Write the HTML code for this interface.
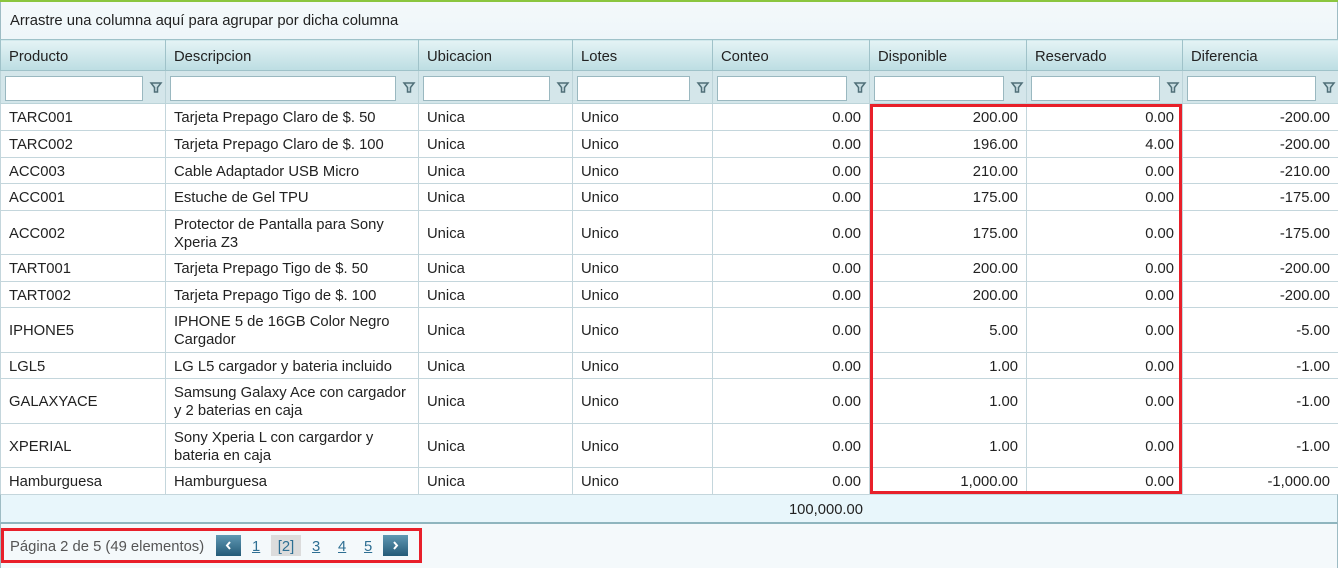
<!DOCTYPE html>
<html><head><meta charset="utf-8"><style>
*{margin:0;padding:0;box-sizing:border-box}
body{width:1338px;height:568px;background:#fff;font-family:"Liberation Sans",sans-serif;font-size:14.8px;color:#222;position:relative;overflow:hidden}
.top{position:absolute;left:0;top:0;width:1338px;height:2px;background:#8cc63f}
.grp{position:absolute;left:0;top:2px;width:1338px;height:37px;background:linear-gradient(#f4f9fb,#eef6f9);border-left:1px solid #9ebcc4;border-right:1px solid #9ebcc4;padding:11px 9px 0;color:#222}
table{position:absolute;left:0;top:39px;border-collapse:collapse;table-layout:fixed;width:1338px}
td,th{border:1px solid #c4d6dc;padding:2px 8px 0;white-space:nowrap;overflow:hidden}
th{height:31px;font-weight:normal;text-align:left;background:linear-gradient(#e4f3f5,#bcdde2);border-color:#9fc2c9;padding-top:3px}
tr.f td{height:33px;background:#d4e6ea;padding:0 4px;border-color:#bcd4d9}
tr.f td div{position:relative;height:25px}
tr.f input{position:absolute;left:0;top:1px;height:25px;width:calc(100% - 18px);border:1px solid #9ab8c0;background:#fff}
tr.f svg{position:absolute;right:-2px;top:6px}
td{line-height:18px;vertical-align:middle}
td.r{text-align:right}
.foot{position:absolute;left:0;top:494px;width:1338px;height:30px;background:#e8f6fb;border:1px solid #9ebcc4;border-top:1px solid #c4d6dc;border-bottom:2px solid #8fb5be}
.foot span{position:absolute;right:474px;top:7px}
.pager{position:absolute;left:0;top:524px;width:1338px;height:44px;background:#f4f9fb;border-left:1px solid #9ebcc4;border-right:1px solid #9ebcc4}
.red1{position:absolute;left:870px;top:104px;width:312px;height:390px;border:3px solid #e8202a}
.red2{position:absolute;left:1px;top:528px;width:421px;height:35px;border:3px solid #e8202a}
.pt{position:absolute;top:15px;color:#555}
.btn{position:absolute;top:11px;width:25px;height:21px;background:linear-gradient(#5f98b3,#255b78)}
.btn svg{position:absolute;left:8px;top:5px}
.pn{position:absolute;top:15px;color:#2e6f93;text-decoration:underline}
.cur{position:absolute;left:270px;top:11px;width:30px;height:21px;background:#dcdcdc;color:#2e6f93;text-align:center;line-height:24px}
</style></head><body>
<div class="top"></div>
<div class="grp">Arrastre una columna aquí para agrupar por dicha columna</div>
<table>
<colgroup><col style="width:165px"><col style="width:253px"><col style="width:154px"><col style="width:140px"><col style="width:157px"><col style="width:157px"><col style="width:156px"><col style="width:156px"></colgroup>
<tr><th>Producto</th><th>Descripcion</th><th>Ubicacion</th><th>Lotes</th><th>Conteo</th><th>Disponible</th><th>Reservado</th><th>Diferencia</th></tr>
<tr class="f">
<td><div><input><svg width="14" height="14" viewBox="0 0 14 14"><path d="M2 2h10l-3.5 4.5v4.5h-3v-4.5z" fill="#c8dde2" stroke="#4f6f78" stroke-width="1.5"/></svg></div></td>
<td><div><input><svg width="14" height="14" viewBox="0 0 14 14"><path d="M2 2h10l-3.5 4.5v4.5h-3v-4.5z" fill="#c8dde2" stroke="#4f6f78" stroke-width="1.5"/></svg></div></td>
<td><div><input><svg width="14" height="14" viewBox="0 0 14 14"><path d="M2 2h10l-3.5 4.5v4.5h-3v-4.5z" fill="#c8dde2" stroke="#4f6f78" stroke-width="1.5"/></svg></div></td>
<td><div><input><svg width="14" height="14" viewBox="0 0 14 14"><path d="M2 2h10l-3.5 4.5v4.5h-3v-4.5z" fill="#c8dde2" stroke="#4f6f78" stroke-width="1.5"/></svg></div></td>
<td><div><input><svg width="14" height="14" viewBox="0 0 14 14"><path d="M2 2h10l-3.5 4.5v4.5h-3v-4.5z" fill="#c8dde2" stroke="#4f6f78" stroke-width="1.5"/></svg></div></td>
<td><div><input><svg width="14" height="14" viewBox="0 0 14 14"><path d="M2 2h10l-3.5 4.5v4.5h-3v-4.5z" fill="#c8dde2" stroke="#4f6f78" stroke-width="1.5"/></svg></div></td>
<td><div><input><svg width="14" height="14" viewBox="0 0 14 14"><path d="M2 2h10l-3.5 4.5v4.5h-3v-4.5z" fill="#c8dde2" stroke="#4f6f78" stroke-width="1.5"/></svg></div></td>
<td><div><input><svg width="14" height="14" viewBox="0 0 14 14"><path d="M2 2h10l-3.5 4.5v4.5h-3v-4.5z" fill="#c8dde2" stroke="#4f6f78" stroke-width="1.5"/></svg></div></td>
</tr>
<tr style="height:27px"><td>TARC001</td><td>Tarjeta Prepago Claro de $. 50</td><td>Unica</td><td>Unico</td><td class="r">0.00</td><td class="r">200.00</td><td class="r">0.00</td><td class="r">-200.00</td></tr>
<tr style="height:27px"><td>TARC002</td><td>Tarjeta Prepago Claro de $. 100</td><td>Unica</td><td>Unico</td><td class="r">0.00</td><td class="r">196.00</td><td class="r">4.00</td><td class="r">-200.00</td></tr>
<tr style="height:26px"><td>ACC003</td><td>Cable Adaptador USB Micro</td><td>Unica</td><td>Unico</td><td class="r">0.00</td><td class="r">210.00</td><td class="r">0.00</td><td class="r">-210.00</td></tr>
<tr style="height:27px"><td>ACC001</td><td>Estuche de Gel TPU</td><td>Unica</td><td>Unico</td><td class="r">0.00</td><td class="r">175.00</td><td class="r">0.00</td><td class="r">-175.00</td></tr>
<tr style="height:44px"><td>ACC002</td><td>Protector de Pantalla para Sony<br>Xperia Z3</td><td>Unica</td><td>Unico</td><td class="r">0.00</td><td class="r">175.00</td><td class="r">0.00</td><td class="r">-175.00</td></tr>
<tr style="height:27px"><td>TART001</td><td>Tarjeta Prepago Tigo de $. 50</td><td>Unica</td><td>Unico</td><td class="r">0.00</td><td class="r">200.00</td><td class="r">0.00</td><td class="r">-200.00</td></tr>
<tr style="height:26px"><td>TART002</td><td>Tarjeta Prepago Tigo de $. 100</td><td>Unica</td><td>Unico</td><td class="r">0.00</td><td class="r">200.00</td><td class="r">0.00</td><td class="r">-200.00</td></tr>
<tr style="height:45px"><td>IPHONE5</td><td>IPHONE 5 de 16GB Color Negro<br>Cargador</td><td>Unica</td><td>Unico</td><td class="r">0.00</td><td class="r">5.00</td><td class="r">0.00</td><td class="r">-5.00</td></tr>
<tr style="height:26px"><td>LGL5</td><td>LG L5 cargador y bateria incluido</td><td>Unica</td><td>Unico</td><td class="r">0.00</td><td class="r">1.00</td><td class="r">0.00</td><td class="r">-1.00</td></tr>
<tr style="height:45px"><td>GALAXYACE</td><td>Samsung Galaxy Ace con cargador<br>y 2 baterias en caja</td><td>Unica</td><td>Unico</td><td class="r">0.00</td><td class="r">1.00</td><td class="r">0.00</td><td class="r">-1.00</td></tr>
<tr style="height:44px"><td>XPERIAL</td><td>Sony Xperia L con cargardor y<br>bateria en caja</td><td>Unica</td><td>Unico</td><td class="r">0.00</td><td class="r">1.00</td><td class="r">0.00</td><td class="r">-1.00</td></tr>
<tr style="height:27px"><td>Hamburguesa</td><td>Hamburguesa</td><td>Unica</td><td>Unico</td><td class="r">0.00</td><td class="r">1,000.00</td><td class="r">0.00</td><td class="r">-1,000.00</td></tr>
</table>
<div class="foot"><span>100,000.00</span></div>
<div class="pager">
<span class="pt" style="left:9px">Página 2 de 5 (49 elementos)</span>
<div class="btn" style="left:215px"><svg width="9" height="11" viewBox="0 0 9 11"><path d="M6 2L3 5.5L6 9" stroke="#fff" stroke-width="2" fill="none"/></svg></div>
<span class="pn" style="left:251px">1</span>
<div class="cur">[2]</div>
<span class="pn" style="left:311px">3</span>
<span class="pn" style="left:337px">4</span>
<span class="pn" style="left:363px">5</span>
<div class="btn" style="left:382px"><svg width="9" height="11" viewBox="0 0 9 11"><path d="M3 2L6 5.5L3 9" stroke="#fff" stroke-width="2" fill="none"/></svg></div>
</div>
<div class="red1"></div>
<div class="red2"></div>
</body></html>
